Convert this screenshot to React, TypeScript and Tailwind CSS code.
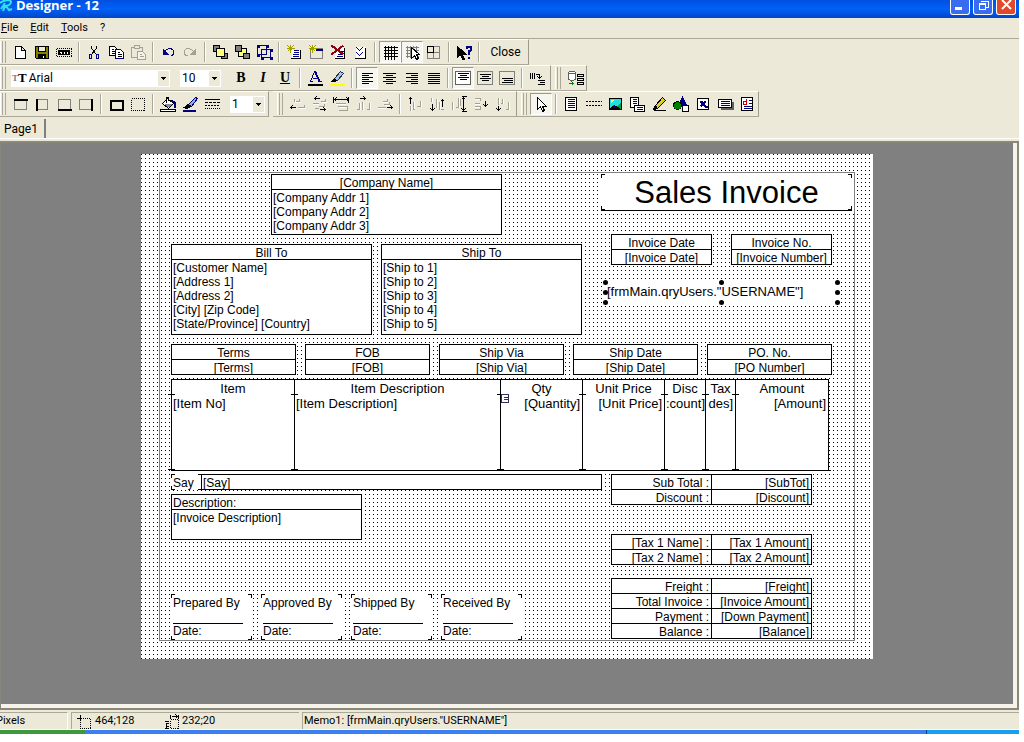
import React from 'react';
import clsx from 'clsx';

const NAVY = '#000080';
const GRAY = '#a3a193';

// All glyphs live on a 16x16 pixel grid, integer coordinates hit pixel centres.
const icons: Record<string, React.ReactNode> = {
  new: <path d="M3 2h6l4 4v8h-10zM9 2v4h4" fill="#fff" />,
  save: (
    <>
      <path d="M1 2h13v12h-12l-1-1z" fill="#808000" />
      <path d="M4 2h7v5h-7z" fill="#ece9d8" />
      <path d="M4 10h7v4h-7z" fill="#000" />
      <path d="M9 11v2" stroke="#fff" />
    </>
  ),
  preview: (
    <>
      <path d="M0 4h15M0 12h15M0 4v8M15 4v8" strokeDasharray="1 1" />
      <path d="M2 6h11v4h-11z" fill="#000" />
      <path d="M3 8h1M5 7v2M8 7v2M11 7v2" stroke="#fff" />
    </>
  ),
  cut: (
    <>
      <path d="M5 1v3l5 6M10 1v3l-5 6" />
      <path d="M3 10h2v4h-2zM10 10h2v4h-2z" stroke={NAVY} />
    </>
  ),
  copy: (
    <>
      <path d="M1 2h5l3 3v6h-8z" fill="#fff" />
      <path d="M3 5h2M3 7h4M3 9h4" />
      <path d="M7 5h5l3 3v6h-8z" fill="#fff" stroke={NAVY} />
      <path d="M9 8h2M9 10h4M9 12h4" />
    </>
  ),
  paste: (
    <>
      <path d="M1 3h11v10h-11z" stroke={GRAY} />
      <path d="M4 1h5v3h-5z" stroke={GRAY} fill="#ece9d8" />
      <path d="M7 7h5l3 3v5h-8z" stroke={GRAY} fill="#f5f3e8" />
      <path d="M9 10h2M9 12h4" stroke={GRAY} />
    </>
  ),
  undo: (
    <>
      <path d="M4 7c3-4 9-4 9 1c0 2-1 3-3 3" stroke={NAVY} />
      <path d="M2 4v6h6z" fill={NAVY} stroke="none" />
    </>
  ),
  redo: (
    <>
      <path d="M11 7c-3-4-9-4-9 1c0 2 1 3 3 3" stroke={GRAY} />
      <path d="M13 4v6h-6z" fill={GRAY} stroke="none" />
    </>
  ),
  front: (
    <>
      <path d="M1 1h6v6h-6zM9 9h6v5h-6z" fill="#808080" />
      <path d="M4 4h8v8h-8z" fill="#ffff80" />
    </>
  ),
  back: (
    <>
      <path d="M4 4h8v8h-8z" fill="#ffff80" />
      <path d="M1 1h6v6h-6zM9 9h6v5h-6z" fill="#808080" />
    </>
  ),
  group: (
    <>
      <path d="M1 1h9v9h-9zM5 5h9v8h-9z" stroke={NAVY} />
      <path d="M0 0h3v3h-3zM9 0h3v3h-3zM0 9h3v3h-3zM4 12h3v3h-3zM13 12h3v3h-3zM13 4h3v3h-3z" fill={NAVY} stroke="none" />
    </>
  ),
  newPage: (
    <>
      <path d="M4 0v8M0 4h8M1 1l6 6M7 1l-6 6" stroke="#a0a000" />
      <path d="M6 5h8v9h-9v-6" fill="#fff" stroke="none" />
      <path d="M14 5v9h-10" />
      <path d="M7 6h5M7 8h5M6 10h6M6 12h6" stroke={NAVY} />
    </>
  ),
  newDialog: (
    <>
      <path d="M2 4h12v10h-12z" fill="#ece9d8" stroke="#808080" />
      <path d="M7 5h7M7 6h7" stroke={NAVY} />
      <path d="M4 0v8M0 4h8M1 1l6 6M7 1l-6 6" stroke="#a0a000" />
    </>
  ),
  remove: (
    <>
      <path d="M5 3h9v11h-10z" fill="#fff" stroke="none" />
      <path d="M14 3v11h-10" />
      <path d="M9 7h4M7 10h5M6 12h6" stroke={NAVY} />
      <path d="M1 1l12 9M13 1l-12 9" stroke="#900010" strokeWidth="2" />
    </>
  ),
  options: (
    <>
      <path d="M3 2h10v11h-10z" fill="#fff" stroke="none" />
      <path d="M13 3v11h-11" />
      <path d="M4 3l3 3l3-3M4 8l3 3l3-3" stroke={NAVY} />
    </>
  ),
  grid: <path d="M3 1v14M6 1v14M9 1v14M12 1v14M1 3h14M1 6h14M1 9h14M1 12h14" />,
  snap: (
    <>
      <path d="M3 1v12M6 1v12M9 1v12M12 1v12M1 3h13M1 6h13M1 9h13M1 12h13" stroke="#808080" />
      <path d="M7 3v11l3-3l2 4l2-1l-2-4h3z" fill="#fff" />
    </>
  ),
  fit: (
    <>
      <path d="M1 2h12v12h-12zM7 2v12M1 8h12" stroke="#808080" />
      <path d="M1 2h6v6h-6z" />
    </>
  ),
  help: (
    <>
      <path d="M1 2v11l3-3l2 5h2l-2-5h4z" fill="#000" />
      <path d="M10 4v-2h4v4l-2 1v3M12 12v2" stroke={NAVY} strokeWidth="2" />
    </>
  ),
  fontColor: (
    <>
      <path d="M3 11l4-10h1l4 10M5 8h6M2 11h3M10 11h4" stroke={NAVY} />
      <path d="M8 2l4 9" stroke={NAVY} strokeWidth="2" />
      <path d="M0 13h15v2h-15z" fill="#000" stroke="none" />
    </>
  ),
  highlight: (
    <>
      <path d="M5 8l6-7l3 2l-6 7h-3z" fill="#aac4e8" stroke="#203060" />
      <path d="M2 11l3-3l2 2l-1 1z" fill="#000" />
      <path d="M0 13h15v2h-15z" fill="#ffff00" stroke="none" />
    </>
  ),
  left: <path d="M2 3h11M2 5h7M2 7h11M2 9h7M2 11h11M2 13h7" />,
  center: <path d="M1 3h13M4 5h7M1 7h13M4 9h7M1 11h13M4 13h7" />,
  right: <path d="M2 3h12M7 5h7M2 7h12M7 9h7M2 11h12M7 13h7" />,
  justify: <path d="M2 3h12M2 5h12M2 7h12M2 9h12M2 11h12M2 13h12" />,
  top: (
    <>
      <path d="M0 1h15v13h-15z" stroke="#606060" fill="#fff" />
      <path d="M2 3h11M4 5h7M2 7h11M4 9h7" />
    </>
  ),
  middle: (
    <>
      <path d="M0 1h15v13h-15z" stroke="#808080" />
      <path d="M2 4h11M4 6h7M2 8h11M4 10h7" />
    </>
  ),
  bottom: (
    <>
      <path d="M0 1h15v13h-15z" stroke="#808080" />
      <path d="M2 8h11M4 10h9M2 12h11" />
    </>
  ),
  rotate: <path d="M1 2v6M3 2v6M5 2v6M6 4h4v4M8 6l2 2l2-2M8 10h7M10 12h5M8 14h7" />,
  data: (
    <>
      <path d="M1 2c1-2 6-2 7 0v7c-1 1-6 1-7 0zM1 2c1 2 6 2 7 0" fill="#fff" stroke="#606060" />
      <path d="M10 4h6v2h-6zM10 8h6v2h-6zM10 12h6v2h-6z" />
      <path d="M1 13h5M4 11l2 2l-2 2" stroke="#008000" />
    </>
  ),
  frameTop: (
    <>
      <path d="M2 3v10h12v-10" stroke="#808080" />
      <path d="M1 2h14v2h-14z" fill="#000" stroke="none" />
    </>
  ),
  frameLeft: (
    <>
      <path d="M2 3h11v10h-11" stroke="#808080" />
      <path d="M1 2h2v12h-2z" fill="#000" stroke="none" />
    </>
  ),
  frameBottom: (
    <>
      <path d="M2 12v-9h12v9" stroke="#808080" />
      <path d="M1 12h14v2h-14z" fill="#000" stroke="none" />
    </>
  ),
  frameRight: (
    <>
      <path d="M13 3h-12v10h12" stroke="#808080" />
      <path d="M12 2h2v12h-2z" fill="#000" stroke="none" />
    </>
  ),
  frameAll: <path d="M2 4h12v9h-12z" strokeWidth="2" />,
  frameNone: <path d="M1 2h13v12h-13z" strokeDasharray="1 1" />,
  fill: (
    <>
      <path d="M7 2l6 5l-5 5l-6-5z" fill="#fff" />
      <path d="M6 6v-5h2v3" />
      <path d="M3 7h9l-4 4z" fill="#8090a0" stroke="none" />
      <path d="M11 4l3 2v5" stroke={NAVY} strokeWidth="2" />
      <path d="M0 13h15v2h-15z" fill="#fff" />
    </>
  ),
  line: (
    <>
      <path d="M6 8l7-7l2 1l-6 8z" fill="#8ab0e0" stroke={NAVY} />
      <path d="M1 11c2 0 3-3 5-3l2 2c-1 2-4 2-7 1z" fill="#000" />
      <path d="M0 13h13v2h-13z" fill={NAVY} stroke="none" />
    </>
  ),
  lineStyle: (
    <>
      <path d="M0 3h15" />
      <path d="M0 6h15" strokeDasharray="3 1" />
      <path d="M0 9h15" strokeDasharray="2 1" />
      <path d="M0 12h15" strokeDasharray="1 1" />
    </>
  ),
  alLeft: (
    <>
      <path d="M10 2v3h-5v-3M15 8v3h-7" stroke={GRAY} />
      <path d="M6 3v3h5M9 12h7" stroke="#fff" />
      <path d="M1 11h5M3 9l-2 2l2 2" />
    </>
  ),
  alHCenter: (
    <>
      <path d="M1 7h6M14 2v3h-5M3 12h4M13 7v3h-6" stroke={GRAY} />
      <path d="M1 8h6M10 6h5M8 11h6" stroke="#fff" />
      <path d="M3 2h5M5 0l-2 2l2 2M8 13h6M12 11l2 2l-2 2" />
    </>
  ),
  alHSpace: (
    <>
      <path d="M2 7h10M4 10h10v4h-9" stroke={GRAY} />
      <path d="M2 8h10M5 11h8" stroke="#fff" />
      <path d="M0 0v6M15 0v6M1 3h14M3 1l-2 2l2 2M13 1l2 2l-2 2" />
    </>
  ),
  alHDist: (
    <>
      <path d="M1 13h3v-7M7 13v-8M11 13h3v-7" stroke={GRAY} />
      <path d="M5 13v-7M8 13v-8M15 13v-7" stroke="#fff" />
      <path d="M4 2h5M8 0l2 2l-2 2" />
    </>
  ),
  alRight: (
    <>
      <path d="M10 2v3h-5M8 11h-8M12 5v3h-6" stroke={GRAY} />
      <path d="M5 6h5M7 9h6M0 12h8" stroke="#fff" />
      <path d="M9 11h6M13 9l2 2l-2 2" />
    </>
  ),
  alTop: (
    <>
      <path d="M3 14v-5M7 13h-1v-8M13 4v6h-4" stroke={GRAY} />
      <path d="M4 14v-5M7 5v7M14 4v6" stroke="#fff" />
      <path d="M3 7v-6M1 3l2-2l2 2" />
    </>
  ),
  alVCenter: (
    <>
      <path d="M2 1v4M7 2v9M10 13v-8M14 13h-3" stroke={GRAY} />
      <path d="M3 1v4M8 2v9M11 5v7" stroke="#fff" />
      <path d="M3 7v7M1 12l2 2l2-2M13 10v-7M11 5l2-2l2 2" />
    </>
  ),
  alVSpace: (
    <>
      <path d="M1 13v-8M4 11h3v-10M9 2v7" stroke={GRAY} />
      <path d="M2 13v-8M8 1v10" stroke="#fff" />
      <path d="M10 0h5M10 15h5M12 1v14M10 3l2-2l2 2M10 12l2 2l2-2" />
    </>
  ),
  alVDist: (
    <>
      <path d="M1 2h6v2M1 7h5M1 10h6v3h-6" stroke={GRAY} />
      <path d="M1 3h5M1 8h5M1 11h5" stroke="#fff" />
      <path d="M12 4v6M10 8l2 2l2-2" />
    </>
  ),
  alBottom: (
    <>
      <path d="M3 1v7M7 2v5h-2M10 13h3v-8" stroke={GRAY} />
      <path d="M4 1v6M8 2v5M14 5v8" stroke="#fff" />
      <path d="M3 9v5M1 12l2 2l2-2" />
    </>
  ),
  select: <path d="M4 1v12l3-3l2 5l2-1l-2-4h4z" fill="#fff" />,
  memo: (
    <>
      <path d="M2 1h11v13h-11z" fill="#fff" />
      <path d="M4 3h7M4 5h7M4 7h7M4 9h7M4 11h7" stroke={NAVY} />
    </>
  ),
  band: <path d="M0 5h16M0 9h16" strokeDasharray="2 1" />,
  picture: (
    <>
      <path d="M2 2h12v11h-12z" fill="#20e0e0" />
      <path d="M3 3h4l-4 4z" fill="#ffff80" stroke="none" />
      <path d="M3 11l3-3l3 2l4-4v6h-10z" fill="#00a040" stroke="none" />
      <path d="M3 12l4-3l5 3z" fill={NAVY} />
    </>
  ),
  subreport: (
    <>
      <path d="M1 1h8v10h-8z" fill="#fff" />
      <path d="M3 3h4M3 5h4M3 7h4" stroke={NAVY} />
      <path d="M5 9h10v6h-10z" fill="#fff" />
      <path d="M7 11h6M7 13h6" stroke={NAVY} />
    </>
  ),
  draw: (
    <>
      <path d="M4 9l7-8l3 3l-8 8z" fill="#e0d020" />
      <path d="M2 13l2-4l2 3z" fill="#000" />
      <path d="M2 14h12" />
    </>
  ),
  shape: (
    <>
      <path d="M9 1l4 7h-8z" fill={NAVY} stroke={NAVY} />
      <circle cx="4" cy="9" r="4" fill="#008000" />
      <path d="M9 9h6v6h-6z" fill="#fff" />
    </>
  ),
  check: (
    <>
      <path d="M2 2h11v11h-11z" fill="#fff" />
      <path d="M5 5l5 5M10 5l-5 5M4 5h3M9 10h3" stroke={NAVY} strokeWidth="2" />
    </>
  ),
  rich: (
    <>
      <path d="M3 5h13v8h-13z" fill="#606060" stroke="none" />
      <path d="M1 3h13v8h-13z" fill="#fff" />
      <path d="M3 5h9M3 7h9M3 9h9" stroke={NAVY} />
    </>
  ),
  chart: (
    <>
      <path d="M2 1h11v13h-11z" fill="#fff" />
      <path d="M4 5h3v3h-3zM7 2v6" stroke="#c00000" />
      <path d="M9 4h3M9 7h3M4 10h8M4 12h8" stroke={NAVY} />
    </>
  ),
  position: (
    <>
      <path d="M4 4h10v10h-10z" strokeDasharray="1 1" />
      <path d="M0 4h5M4 0v5" />
    </>
  ),
  size: (
    <>
      <path d="M7 5h8v9h-8z" strokeDasharray="1 1" />
      <path d="M7 0v4M15 0v4M8 2h6M12 0l2 2l-2 2M1 7h4M1 14h4M3 8v6M2 12h3M2 9h3" />
    </>
  ),
};

const Icon = ({ name }: { name: string }) => (
  <svg width="16" height="16" viewBox="-0.5 -0.5 16 16" fill="none" stroke="#000" shapeRendering="crispEdges" className="shrink-0 overflow-visible" aria-hidden="true">
    {icons[name]}
  </svg>
);

const ToolButton = ({ name, pressed }: { name: string; pressed?: boolean }) => (
  <button
    aria-label={name}
    aria-pressed={pressed}
    className={clsx(
      'flex h-[22px] w-[22px] shrink-0 items-center justify-center',
      pressed && 'border border-t-[#9c9a8c] border-l-[#9c9a8c] border-r-white border-b-white bg-[#f6f5ee]',
    )}
  >
    <Icon name={name} />
  </button>
);

const Sep = () => <span className="mx-[3px] h-[20px] w-[2px] shrink-0 border-l border-l-[#aca899] border-r border-r-white" />;

// "|" stands for a separator, a leading "*" for a pressed button
const Tools = ({ items }: { items: string }) => (
  <>
    {items.split(' ').map((item, i) =>
      item === '|' ? <Sep key={i} /> : <ToolButton key={i} name={item.replace('*', '')} pressed={item[0] === '*'} />,
    )}
  </>
);

const Toolbar = ({ label, first, className, children }: { label: string; first?: boolean; className?: string; children: React.ReactNode }) => (
  <div
    role="toolbar"
    aria-label={label}
    className={clsx('flex h-[26px] items-center border-t border-r border-b border-t-white border-r-[#9c9a8c] border-b-[#aca899]', className)}
  >
    <span className={clsx('mr-[2px] h-[22px] w-[3px] shrink-0 border-r border-l border-l-white border-r-[#aca899]', first ? 'ml-0' : 'ml-[4px]')} />
    <span className="mr-[3px] h-[22px] w-px shrink-0 bg-[#aca899]" />
    {children}
  </div>
);

const Combo = ({ label, value, className, children }: { label: string; value: string; className: string; children?: React.ReactNode }) => (
  <div className={clsx('relative flex h-[17px] shrink-0 items-center bg-white', className)}>
    {children}
    <select aria-label={label} defaultValue={value} className="h-full w-full appearance-none bg-transparent pl-[2px] text-[12px] leading-[16px] outline-none">
      <option>{value}</option>
    </select>
    <span className="pointer-events-none absolute top-px right-px bottom-px flex w-[11px] items-center justify-center bg-[#ece9d8]">
      <svg width="5" height="3" viewBox="0 0 5 3" shapeRendering="crispEdges" aria-hidden="true">
        <path d="M0 0h5v1h-1v1h-1v1h-1v-1h-1v-1h-1z" />
      </svg>
    </span>
  </div>
);

const FontStyles = () => (
  <div className="flex font-['Liberation_Serif',serif] text-[14px] leading-[20px] font-bold">
    <button className="w-[22px]">B</button>
    <button className="w-[22px] italic">I</button>
    <button className="w-[22px] underline">U</button>
  </div>
);

const Corners = () => (
  <>
    <span className="absolute top-0 left-0 h-[4px] w-[4px] border-t border-l border-black" />
    <span className="absolute top-0 right-0 h-[4px] w-[4px] border-t border-r border-black" />
    <span className="absolute bottom-0 left-0 h-[4px] w-[4px] border-b border-l border-black" />
    <span className="absolute right-0 bottom-0 h-[4px] w-[4px] border-r border-b border-black" />
  </>
);

interface BlockProps {
  title: string;
  lines: string[];
  className: string;
  titleLeft?: boolean;
  centered?: boolean;
}

const Block = ({ title, lines, className, titleLeft, centered }: BlockProps) => (
  <div className={clsx('absolute border border-black bg-white whitespace-nowrap', className)}>
    <div className={clsx('h-[15px] border-b border-black px-px pt-px', !titleLeft && 'text-center')}>{title}</div>
    <div className={clsx('px-px pt-px', centered && 'text-center')}>
      {lines.map(line => <div key={line}>{line}</div>)}
    </div>
  </div>
);

const blocks: BlockProps[] = [
  { title: '[Company Name]', lines: ['[Company Addr 1]', '[Company Addr 2]', '[Company Addr 3]'], className: 'left-[130px] top-[20px] w-[231px] h-[61px]' },
  { title: 'Bill To', lines: ['[Customer Name]', '[Address 1]', '[Address 2]', '[City] [Zip Code]', '[State/Province] [Country]'], className: 'left-[30px] top-[90px] w-[201px] h-[91px]' },
  { title: 'Ship To', lines: ['[Ship to 1]', '[Ship to 2]', '[Ship to 3]', '[Ship to 4]', '[Ship to 5]'], className: 'left-[240px] top-[90px] w-[201px] h-[91px]' },
  { title: 'Invoice Date', lines: ['[Invoice Date]'], centered: true, className: 'left-[470px] top-[80px] w-[101px] h-[31px]' },
  { title: 'Invoice No.', lines: ['[Invoice Number]'], centered: true, className: 'left-[590px] top-[80px] w-[101px] h-[31px]' },
  { title: 'Terms', lines: ['[Terms]'], centered: true, className: 'left-[30px] top-[190px] w-[125px] h-[31px]' },
  { title: 'FOB', lines: ['[FOB]'], centered: true, className: 'left-[164px] top-[190px] w-[125px] h-[31px]' },
  { title: 'Ship Via', lines: ['[Ship Via]'], centered: true, className: 'left-[298px] top-[190px] w-[125px] h-[31px]' },
  { title: 'Ship Date', lines: ['[Ship Date]'], centered: true, className: 'left-[432px] top-[190px] w-[125px] h-[31px]' },
  { title: 'PO. No.', lines: ['[PO Number]'], centered: true, className: 'left-[566px] top-[190px] w-[125px] h-[31px]' },
  { title: 'Description:', lines: ['[Invoice Description]'], titleLeft: true, className: 'left-[30px] top-[340px] w-[191px] h-[46px]' },
];

const columns = [
  { title: 'Item', field: '[Item No]', width: 'w-[123px]', align: 'text-left pl-px' },
  { title: 'Item Description', field: '[Item Description]', width: 'w-[206px]', align: 'text-left pl-px' },
  { title: 'Qty', field: '[Quantity]', width: 'w-[82px]', align: 'text-right pr-[2px]' },
  { title: 'Unit Price', field: '[Unit Price]', width: 'w-[82px]', align: 'text-right pr-[2px]' },
  { title: 'Disc', field: ':count]', width: 'w-[41px]', align: 'text-right' },
  { title: 'Tax', field: 'des]', width: 'w-[30px]', align: 'text-right pr-[2px]' },
  { title: 'Amount', field: '[Amount]', width: 'w-[93px]', align: 'text-right pr-[2px]' },
];

const DetailTable = () => (
  <div className="absolute top-[225px] left-[30px] w-[660px] border-b border-black">
    <table className="w-[657px] table-fixed border-separate border-spacing-0 border-t border-r border-black bg-white text-[13px] whitespace-nowrap">
      <thead>
        <tr>
          {columns.map(c => (
            <th key={c.title} className={clsx('relative h-[15px] border-l border-black p-0 pt-[2px] font-normal', c.width)}>
              <div className="h-[13px]">{c.title}</div>
              <span className="absolute bottom-0 -left-[4px] h-px w-[7px] bg-black" />
            </th>
          ))}
        </tr>
      </thead>
      <tbody>
        <tr>
          {columns.map(c => (
            <td key={c.title} className="relative h-[75px] border-l border-black p-0 pt-[2px] align-top">
              <div className={c.align}>{c.field}</div>
              <span className="absolute bottom-0 -left-[4px] h-px w-[7px] bg-black" />
            </td>
          ))}
        </tr>
      </tbody>
    </table>
  </div>
);

const Totals = ({ rows, className }: { rows: string[][]; className: string }) => (
  <table className={clsx('absolute w-[201px] table-fixed border-separate border-spacing-0 border-r border-b border-black bg-white text-right whitespace-nowrap', className)}>
    <tbody>
      {rows.map(([name, value]) => (
        <tr key={name}>
          <th className="h-[15px] border-t border-l border-black p-0 pr-[2px] font-normal">
            <div className="h-[14px] pt-px">{name} :</div>
          </th>
          <td className="h-[15px] border-t border-l border-black p-0 pr-[2px]">
            <div className="h-[14px] pt-px">{value}</div>
          </td>
        </tr>
      ))}
    </tbody>
  </table>
);

const signatures = [
  { title: 'Prepared By', className: 'left-[30px]' },
  { title: 'Approved By', className: 'left-[120px]' },
  { title: 'Shipped By', className: 'left-[210px]' },
  { title: 'Received By', className: 'left-[300px]' },
];

const handles = [
  'left-[462px] top-[126px]', 'left-[578px] top-[126px]', 'left-[694px] top-[126px]',
  'left-[462px] top-[136px]', 'left-[694px] top-[136px]',
  'left-[462px] top-[146px]', 'left-[578px] top-[146px]', 'left-[694px] top-[146px]',
];

// The sheet is a free canvas: every object sits at its own designer coordinates.
const ReportPage = () => (
  <div className="relative mx-auto h-[505px] w-[732px] bg-[linear-gradient(90deg,transparent_1px,#fff_1px),linear-gradient(#000_1px,#fff_1px)] bg-[length:4px_4px] font-['Liberation_Sans',Arial,sans-serif] text-[12px] leading-[14px]">
    <div className="absolute top-[18px] left-[18px] h-[469px] w-[696px] border border-[#808080]" />
    {blocks.map(b => <Block key={b.title} {...b} />)}

    <div className="absolute top-[19px] left-[458px] h-[38px] w-[255px] bg-white" />
    <div className="absolute top-[20px] left-[460px] h-[37px] w-[251px] border-b border-black text-center text-[31px] leading-[38px]">
      Sales Invoice
      <Corners />
    </div>

    <div className="absolute top-[126px] left-[462px] h-[25px] w-[236px] bg-white pt-[5px] pl-[4px] text-[13px]">[frmMain.qryUsers."USERNAME"]</div>
    {handles.map(h => <span key={h} className={clsx('absolute h-[5px] w-[5px] rounded-full bg-black', h)} />)}

    <DetailTable />
    <svg className="absolute top-[240px] left-[360px]" width="8" height="9" viewBox="-0.5 -0.5 8 9" fill="#fff" stroke="#303060" shapeRendering="crispEdges" aria-hidden="true">
      <path d="M0 0h7v8h-7zM2 3h4M2 5h4" />
    </svg>

    <div className="absolute top-[320px] left-[30px] h-[16px] w-[31px] bg-white pt-[2px] pl-[2px]">
      Say
      <Corners />
    </div>
    <div className="absolute top-[320px] left-[60px] h-[16px] w-[401px] border border-black bg-white px-px pt-px">[Say]</div>

    <Totals className="top-[320px] left-[470px]" rows={[['Sub Total', '[SubTot]'], ['Discount', '[Discount]']]} />
    <Totals className="top-[380px] left-[470px]" rows={[['[Tax 1 Name]', '[Tax 1 Amount]'], ['[Tax 2 Name]', '[Tax 2 Amount]']]} />
    <Totals
      className="top-[424px] left-[470px]"
      rows={[['Freight', '[Freight]'], ['Total Invoice', '[Invoice Amount]'], ['Payment', '[Down Payment]'], ['Balance', '[Balance]']]}
    />

    {signatures.map(s => (
      <div key={s.title} className={clsx('absolute top-[440px] h-[46px] w-[81px] bg-white pt-[2px] pl-[2px]', s.className)}>
        <div>{s.title}</div>
        <div className="h-[14px] w-[70px] border-b border-black" />
        <div>Date:</div>
        <Corners />
      </div>
    ))}
  </div>
);

const TitleBar = () => (
  <header className="flex h-[18px] items-start bg-linear-to-b from-[#0050e0] via-[#0060f8] to-[#0046c8] text-white">
    <svg width="14" height="12" viewBox="0 0 14 12" fill="none" stroke="#30e0f0" strokeWidth="2" aria-hidden="true">
      <path d="M0 3C4 0 11-1 11 2S7 6 5 6L3 11M6 6l3 4 3-1M1 9l4-6" />
    </svg>
    <h1 className="ml-[2px] flex-1 font-['Open_Sans','Trebuchet_MS',sans-serif] text-[13px] leading-[11px] font-bold">Designer - 12</h1>
    <div className="flex gap-[3px] pr-[3px]">
      <button aria-label="Minimize" className="flex h-[15px] w-[20px] items-end rounded-b-[3px] border border-t-0 border-white bg-[#3a6cf0] pb-[4px] pl-[4px]">
        <span className="h-[3px] w-[7px] bg-white" />
      </button>
      <button aria-label="Restore" className="flex h-[15px] w-[20px] justify-center rounded-b-[3px] border border-t-0 border-white bg-[#3a6cf0]">
        <svg width="11" height="10" viewBox="0 0 11 10" fill="none" stroke="#fff" shapeRendering="crispEdges" aria-hidden="true">
          <path d="M3 1h7v6h-2M1 4h6v5h-6zM1 3h7" />
        </svg>
      </button>
      <button aria-label="Close window" className="flex h-[15px] w-[20px] justify-center rounded-b-[3px] border border-t-0 border-white bg-[#e0492a]">
        <svg width="11" height="10" viewBox="0 0 11 10" stroke="#fff" strokeWidth="2" aria-hidden="true">
          <path d="M1 0l9 9M10 0l-9 9" />
        </svg>
      </button>
    </div>
  </header>
);

const App: React.FC = () => {
  return (
    <div className="bg-white pr-[5px] font-['Roboto',Tahoma,sans-serif] text-[11px] leading-[14px] text-black">
      <div className="overflow-hidden bg-[#ece9d8]">
        <TitleBar />
        <nav className="flex h-[21px] items-center gap-[12px] border-b border-[#aca899] pb-px pl-px">
          <button><u>F</u>ile</button>
          <button><u>E</u>dit</button>
          <button><u>T</u>ools</button>
          <button>?</button>
        </nav>

        <div className="flex">
          <Toolbar label="Standard" first>
            <Tools items="new save preview | cut copy paste | undo redo | front back group | newPage newDialog remove options | *grid *snap fit | help |" />
            <button className="w-[45px] text-center text-[12px]">Close</button>
          </Toolbar>
        </div>
        <div className="flex">
          <Toolbar label="Text" first className="pr-[2px]">
            <Combo label="Font" value="Arial" className="ml-[2px] w-[159px] pl-px">
              <span className="flex items-end font-['Liberation_Serif',serif] leading-[14px] font-bold">
                <span className="text-[9px] text-[#808080]">T</span>
                <span className="text-[13px]">T</span>
              </span>
            </Combo>
            <Combo label="Font size" value="10" className="mr-[9px] ml-[10px] w-[41px]" />
            <FontStyles />
            <Tools items="| fontColor highlight | *left center right justify | *top middle bottom | rotate" />
          </Toolbar>
          <Toolbar label="Data">
            <Tools items="data" />
          </Toolbar>
        </div>
        <div className="flex">
          <Toolbar label="Frame" first className="pr-[3px]">
            <Tools items="frameTop frameLeft frameBottom frameRight | frameAll frameNone | fill line lineStyle" />
            <Combo label="Line width" value="1" className="ml-[7px] w-[35px]" />
          </Toolbar>
          <Toolbar label="Alignment" className="ml-[4px] pr-[2px]">
            <Tools items="alLeft alHCenter alHSpace alHDist alRight | alTop alVCenter alVSpace alVDist alBottom" />
          </Toolbar>
          <Toolbar label="Objects">
            <Tools items="*select | memo band picture subreport draw shape check rich chart" />
          </Toolbar>
        </div>

        <div role="tablist" className="flex h-[22px] items-end border-b border-white">
          <button role="tab" aria-selected="true" className="h-[19px] border-r-2 border-[#808080] pr-[6px] pl-[4px] text-[12px]">Page1</button>
        </div>

        <main className="mt-[2px] border-t-2 border-r-2 border-b-2 border-l border-[#8a887a]">
          <div className="border-r-4 border-b-4 border-[#f6f4ea] bg-[#808080] pt-[11px] pb-[45px]">
            <ReportPage />
          </div>
        </main>

        <footer className="flex h-[20px] gap-[3px] border-b border-white pt-[2px]">
          <div className="w-[68px] border-t border-r border-t-[#aca899] border-r-white pt-px">
            <span className="-ml-[4px]">Pixels</span>
          </div>
          <div className="flex w-[228px] border-t border-l border-[#aca899] pt-px pl-[4px]">
            <span className="flex w-[87px] gap-[3px]"><Icon name="position" />464;128</span>
            <span className="flex gap-[3px]"><Icon name="size" />232;20</span>
          </div>
          <div className="flex-1 border-t border-l border-[#aca899] pt-px pl-px">Memo1: [frmMain.qryUsers."USERNAME"]</div>
        </footer>
        <div className="flex h-[4px]">
          <div className="w-[85px] bg-[#3c9a3c]" />
          <div className="flex-1 bg-[#3a80f0]" />
          <div className="w-[93px] border-l border-[#0a4090] bg-[#18a0f0]" />
        </div>
      </div>
    </div>
  );
};

export default App;
